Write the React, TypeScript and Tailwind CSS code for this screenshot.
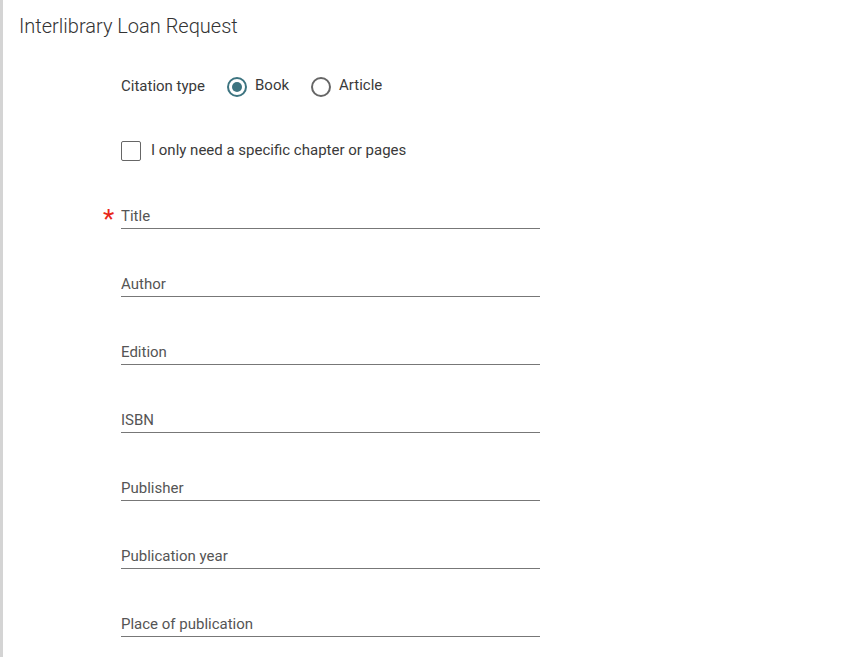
import { useState } from 'react'

const fields = ['Title', 'Author', 'Edition', 'ISBN', 'Publisher', 'Publication year', 'Place of publication']

export default function App() {
  const [type, setType] = useState<'book' | 'article'>('book')
  const [chapter, setChapter] = useState(false)

  return (
    <div className="min-h-[657px] bg-white border-l-[3px] border-[#d4d4d4] font-['Roboto',sans-serif] text-[#3a3a3a]">
      <h1 className="pl-4 pt-[13px] text-[20px] font-light leading-[26px] text-[#333]">Interlibrary Loan Request</h1>

      <div className="pl-[118px] pt-[34px]">
        <div className="flex items-center h-[28px] text-[15px]">
          <span className="mr-[22px] -mt-[2px]">Citation type</span>
          <button onClick={() => setType('book')} className="flex items-center mr-[22px]">
            <span className={`w-[20px] h-[20px] rounded-full border-2 flex items-center justify-center mr-[8px] ${type === 'book' ? 'border-[#3d7480]' : 'border-[#666]'}`}>
              {type === 'book' && <span className="w-[10px] h-[10px] rounded-full bg-[#3d7480]" />}
            </span>
            <span className="-mt-[3px]">Book</span>
          </button>
          <button onClick={() => setType('article')} className="flex items-center">
            <span className={`w-[20px] h-[20px] rounded-full border-2 flex items-center justify-center mr-[8px] ${type === 'article' ? 'border-[#3d7480]' : 'border-[#666]'}`}>
              {type === 'article' && <span className="w-[10px] h-[10px] rounded-full bg-[#3d7480]" />}
            </span>
            <span className="-mt-[3px]">Article</span>
          </button>
        </div>

        <label className="flex items-center mt-[38px] h-[24px] text-[15px] cursor-pointer">
          <input type="checkbox" checked={chapter} onChange={(e) => setChapter(e.target.checked)} className="sr-only" />
          <span className={`w-[20px] h-[20px] rounded-[2px] border-[1.5px] border-[#666] mr-[10px] ${chapter ? 'bg-[#3d7480]' : ''}`} />
          <span className="-mt-[1px]">I only need a specific chapter or pages</span>
        </label>

        <div className="mt-[22px] w-[419px]">
          {fields.map((f, i) => (
            <div key={f} className={`relative h-[44px] border-b border-[#777] flex items-end pb-[2px] ${i > 0 ? 'mt-[24px]' : ''}`}>
              {i === 0 && <span className="absolute -left-[18px] -bottom-[4px] text-[26px] leading-[26px] text-[#e8271a]">*</span>}
              <input placeholder={f} className="w-full outline-none text-[15px] leading-[20px] text-[#333] placeholder:text-[#555] bg-transparent" />
            </div>
          ))}
        </div>
      </div>
    </div>
  )
}
